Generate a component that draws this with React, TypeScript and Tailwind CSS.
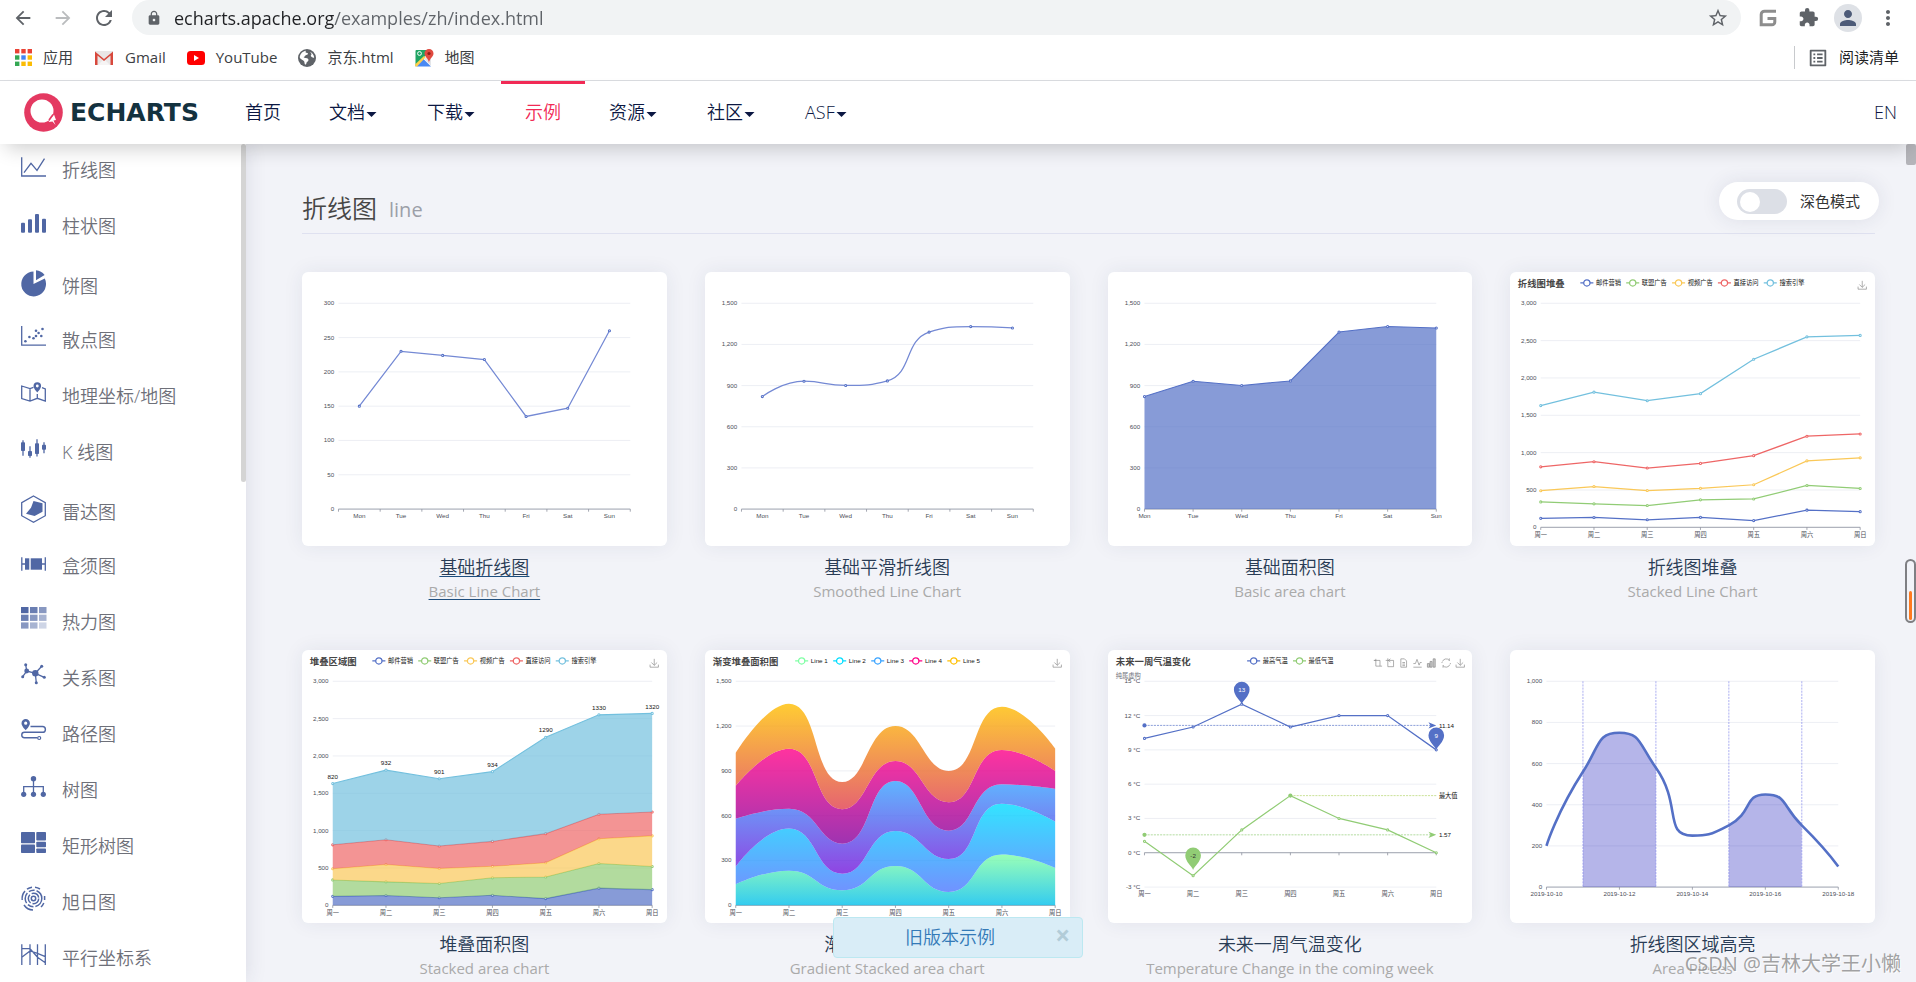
import { Fragment, useState } from "react";
import type { ReactNode } from "react";
import {
  MdArrowBack,
  MdArrowForward,
  MdExtension,
  MdListAlt,
  MdLock,
  MdMoreVert,
  MdPerson,
  MdPublic,
  MdRefresh,
  MdStarBorder,
} from "react-icons/md";

type Point = [number, number];

const WEEK_EN = ["Mon", "Tue", "Wed", "Thu", "Fri", "Sat", "Sun"];
const WEEK_ZH = ["周一", "周二", "周三", "周四", "周五", "周六", "周日"];
const PALETTE = ["#5470c6", "#91cc75", "#fac858", "#ee6666", "#73c0de"];
const CHANNELS = ["邮件营销", "联盟广告", "视频广告", "直接访问", "搜索引擎"];
const VISITS = [820, 932, 901, 934, 1290, 1330, 1320];
const CHANNEL_DATA = [
  [120, 132, 101, 134, 90, 230, 210],
  [220, 182, 191, 234, 290, 330, 310],
  [150, 232, 201, 154, 190, 330, 410],
  [320, 332, 301, 334, 390, 330, 320],
  VISITS,
];
const GRADIENT_DATA = [
  [140, 232, 101, 264, 90, 340, 250],
  [120, 282, 111, 234, 220, 340, 310],
  [320, 132, 201, 334, 190, 130, 220],
  [220, 402, 231, 134, 190, 230, 120],
  [220, 302, 181, 234, 210, 290, 150],
];
const GRADIENT_PALETTE = ["#80ffa5", "#00ddff", "#37a2ff", "#ff0087", "#ffbf00"];
const GRADIENT_STOPS = [
  ["#80ffa5", "#01bfec"],
  ["#00ddff", "#4d77ff"],
  ["#37a2ff", "#7415db"],
  ["#ff0087", "#87009d"],
  ["#ffbf00", "#e03e4c"],
];

/* ---------- chart helpers ---------- */

interface Grid {
  left: number;
  right: number;
  top: number;
  bottom: number;
}

const DEFAULT_GRID: Grid = { left: 70, right: 630, top: 60, bottom: 455 };
const WIDE_GRID: Grid = { left: 59, right: 672, top: 60, bottom: 490 };

const clamp = (v: number, a: number, b: number) =>
  Math.max(Math.min(v, Math.max(a, b)), Math.min(a, b));

const toPoints = (grid: Grid, data: number[], min: number, max: number, boundaryGap = false): Point[] => {
  const width = grid.right - grid.left;
  const step = boundaryGap ? width / data.length : width / (data.length - 1);
  const start = boundaryGap ? grid.left + step / 2 : grid.left;
  return data.map((v, i) => [
    start + i * step,
    grid.bottom - ((v - min) / (max - min)) * (grid.bottom - grid.top),
  ]);
};

const straight = (points: Point[]) => points.map(([x, y]) => `${x} ${y}`).join(" L");

// Cubic segments whose control points never pass the neighbouring values
const smoothPath = (points: Point[], smooth = 0.5) => {
  let path = `${points[0][0]} ${points[0][1]}`;
  let [c0x, c0y] = points[0];
  for (let i = 1; i < points.length; i++) {
    const [px, py] = points[i - 1];
    const [x, y] = points[i];
    let c1x = x;
    let c1y = y;
    let nextX = x;
    let nextY = y;
    if (i < points.length - 1) {
      const [nx, ny] = points[i + 1];
      const lenPrev = Math.hypot(x - px, y - py);
      const lenNext = Math.hypot(nx - x, ny - y);
      const ratio = lenNext / (lenNext + lenPrev);
      nextX = clamp(x + (nx - px) * smooth * ratio, x, nx);
      nextY = clamp(y + (ny - py) * smooth * ratio, y, ny);
      c1x = clamp(x - ((nextX - x) * lenPrev) / lenNext, px, x);
      c1y = clamp(y - ((nextY - y) * lenPrev) / lenNext, py, y);
      nextX = x + ((x - c1x) * lenNext) / lenPrev;
      nextY = y + ((y - c1y) * lenNext) / lenPrev;
    }
    path += ` C${c0x} ${c0y} ${c1x} ${c1y} ${x} ${y}`;
    c0x = nextX;
    c0y = nextY;
  }
  return path;
};

const stack = (series: number[][]) =>
  series.map((_, i) => series[0].map((_, j) => series.slice(0, i + 1).reduce((sum, s) => sum + s[j], 0)));

const Chart = ({ children }: { children: ReactNode }) => (
  <svg
    viewBox="0 0 700 525"
    aria-hidden="true"
    className="block w-full rounded-md bg-white font-['Liberation_Sans','Noto_Sans_CJK_SC',sans-serif] text-[12px] shadow-[0_0_20px_rgba(40,50,90,0.08)]"
  >
    {children}
  </svg>
);

interface AxesProps {
  grid: Grid;
  ticks: string[];
  labels: string[];
  boundaryGap?: boolean;
  axisY?: number;
}

const Axes = ({ grid, ticks, labels, boundaryGap = false, axisY = grid.bottom }: AxesProps) => {
  const width = grid.right - grid.left;
  const gap = (grid.bottom - grid.top) / (ticks.length - 1);
  const step = boundaryGap ? width / labels.length : width / (labels.length - 1);
  const tickCount = boundaryGap ? labels.length + 1 : labels.length;
  return (
    <g>
      {ticks.map((tick, i) => {
        const y = grid.bottom - i * gap;
        return (
          <Fragment key={tick}>
            <path d={`M${grid.left} ${y}H${grid.right}`} stroke="#e8ebf1" strokeWidth="1.5" />
            <text x={grid.left - 8} y={y - 1} textAnchor="end" dominantBaseline="central" fill="#4c4e57">
              {tick}
            </text>
          </Fragment>
        );
      })}
      <path d={`M${grid.left} ${axisY}H${grid.right}`} stroke="#8c909c" strokeWidth="1.5" />
      {Array.from({ length: tickCount }, (_, i) => (
        <path key={i} d={`M${grid.left + i * step} ${axisY}v5`} stroke="#8c909c" strokeWidth="1.5" />
      ))}
      {labels.map((label, i) => (
        <text
          key={label}
          x={grid.left + (boundaryGap ? i + 0.5 : i) * step}
          y={grid.bottom + 13}
          textAnchor="middle"
          dominantBaseline="central"
          fill="#4c4e57"
        >
          {label}
        </text>
      ))}
    </g>
  );
};

const Dots = ({ points, color }: { points: Point[]; color: string }) => (
  <g fill="#fff" stroke={color} strokeWidth="2">
    {points.map(([x, y]) => (
      <circle key={x} cx={x} cy={y} r="2" />
    ))}
  </g>
);

const Title = ({ children }: { children: ReactNode }) => (
  <text x="15" y="23" dominantBaseline="central" fill="#464646" className="text-[18px] font-bold">
    {children}
  </text>
);

const Legend = ({ x, pitch, items, colors }: { x: number; pitch: number; items: string[]; colors: string[] }) => (
  <g>
    {items.map((item, i) => (
      <g key={item} transform={`translate(${x + i * pitch} 21)`}>
        <path d="M0 0H25" stroke={colors[i]} strokeWidth="2.4" />
        <circle cx="12.5" cy="0" r="6" fill="#fff" stroke={colors[i]} strokeWidth="2.4" />
        <text x="30" y="0" dominantBaseline="central" fill="#111">
          {item}
        </text>
      </g>
    ))}
  </g>
);

const DownloadTool = () => (
  <path d="M668 28v5h16v-5M676 17v12M670.500 24l5.500 5.500 5.500-5.500" fill="none" stroke="#888" strokeWidth="1.3" />
);

/* ---------- charts ---------- */

const THOUSANDS = ["0", "300", "600", "900", "1,200", "1,500"];
const STACK_TICKS = ["0", "500", "1,000", "1,500", "2,000", "2,500", "3,000"];

const BasicLine = () => {
  const points = toPoints(DEFAULT_GRID, [150, 230, 224, 218, 135, 147, 260], 0, 300, true);
  return (
    <Chart>
      <Axes grid={DEFAULT_GRID} ticks={["0", "50", "100", "150", "200", "250", "300"]} labels={WEEK_EN} boundaryGap />
      <path d={`M${straight(points)}`} fill="none" stroke="#7489d4" strokeWidth="2.4" />
      <Dots points={points} color="#5470c6" />
    </Chart>
  );
};

const SmoothLine = () => {
  const points = toPoints(DEFAULT_GRID, VISITS, 0, 1500, true);
  return (
    <Chart>
      <Axes grid={DEFAULT_GRID} ticks={THOUSANDS} labels={WEEK_EN} boundaryGap />
      <path d={`M${smoothPath(points)}`} fill="none" stroke="#7489d4" strokeWidth="2.4" />
      <Dots points={points} color="#5470c6" />
    </Chart>
  );
};

const BasicArea = () => {
  const points = toPoints(DEFAULT_GRID, VISITS, 0, 1500);
  return (
    <Chart>
      <Axes grid={DEFAULT_GRID} ticks={THOUSANDS} labels={WEEK_EN} />
      <path d={`M70 455 L${straight(points)} L630 455Z`} fill="#5470c6" fillOpacity="0.7" />
      <path d={`M${straight(points)}`} fill="none" stroke="#5470c6" strokeWidth="2" />
      <Dots points={points} color="#5470c6" />
    </Chart>
  );
};

const StackedLine = () => (
  <Chart>
    <Title>折线图堆叠</Title>
    <Legend x={135} pitch={88} items={CHANNELS} colors={PALETTE} />
    <DownloadTool />
    <Axes grid={WIDE_GRID} ticks={STACK_TICKS} labels={WEEK_ZH} />
    {stack(CHANNEL_DATA).map((data, i) => {
      const points = toPoints(WIDE_GRID, data, 0, 3000);
      return (
        <g key={CHANNELS[i]}>
          <path d={`M${straight(points)}`} fill="none" stroke={PALETTE[i]} strokeWidth="2.4" />
          <Dots points={points} color={PALETTE[i]} />
        </g>
      );
    })}
  </Chart>
);

const StackedArea = () => {
  const rows = stack(CHANNEL_DATA).map((data) => toPoints(WIDE_GRID, data, 0, 3000));
  const base = toPoints(WIDE_GRID, [0, 0, 0, 0, 0, 0, 0], 0, 3000);
  return (
    <Chart>
      <Title>堆叠区域图</Title>
      <Legend x={135} pitch={88} items={CHANNELS} colors={PALETTE} />
      <DownloadTool />
      <Axes grid={WIDE_GRID} ticks={STACK_TICKS} labels={WEEK_ZH} />
      {rows.map((points, i) => {
        const below = [...(rows[i - 1] ?? base)].reverse();
        return (
          <g key={CHANNELS[i]}>
            <path d={`M${straight(points)} L${straight(below)}Z`} fill={PALETTE[i]} fillOpacity="0.7" />
            <path d={`M${straight(points)}`} fill="none" stroke={PALETTE[i]} strokeWidth="2" />
            <Dots points={points} color={PALETTE[i]} />
          </g>
        );
      })}
      {rows[4].map(([x, y], i) => (
        <text key={x} x={x} y={y - 14} textAnchor="middle" dominantBaseline="central" fill="#111">
          {VISITS[i]}
        </text>
      ))}
    </Chart>
  );
};

const GradientArea = () => {
  const rows = stack(GRADIENT_DATA).map((data) => toPoints(WIDE_GRID, data, 0, 1500));
  const base = toPoints(WIDE_GRID, [0, 0, 0, 0, 0, 0, 0], 0, 1500);
  return (
    <Chart>
      <defs>
        {GRADIENT_STOPS.map(([from, to], i) => (
          <linearGradient key={from} id={`band-${i}`} x1="0" y1="0" x2="0" y2="1">
            <stop offset="0" stopColor={from} />
            <stop offset="1" stopColor={to} />
          </linearGradient>
        ))}
      </defs>
      <Title>渐变堆叠面积图</Title>
      <Legend
        x={173}
        pitch={73}
        items={["Line 1", "Line 2", "Line 3", "Line 4", "Line 5"]}
        colors={GRADIENT_PALETTE}
      />
      <DownloadTool />
      <Axes grid={WIDE_GRID} ticks={THOUSANDS} labels={WEEK_ZH} />
      {rows.map((points, i) => {
        const below = [...(rows[i - 1] ?? base)].reverse();
        return (
          <path
            key={i}
            d={`M${smoothPath(points)} L${smoothPath(below)}Z`}
            fill={`url(#band-${i})`}
            fillOpacity="0.8"
          />
        );
      })}
    </Chart>
  );
};

const Pin = ({ x, y, color, text, label }: { x: number; y: number; color: string; text: string; label: string }) => (
  <g transform={`translate(${x} ${y})`}>
    <path d="M0 0C-2-7-15-15-15-28a15 15 0 0 1 30 0C15-15 2-7 0 0Z" fill={color} />
    <text x="0" y="-28" textAnchor="middle" dominantBaseline="central" fill={text}>
      {label}
    </text>
  </g>
);

const Temperature = () => {
  const high = toPoints(DEFAULT_GRID, [10, 11, 13, 11, 12, 12, 9], -3, 15);
  const low = toPoints(DEFAULT_GRID, [1, -2, 2, 5, 3, 2, 0], -3, 15);
  const [highMean, lowMean] = toPoints(DEFAULT_GRID, [11.14, 1.57], -3, 15).map((p) => p[1]);
  return (
    <Chart>
      <Title>未来一周气温变化</Title>
      <text x="15" y="48" dominantBaseline="central" fill="#6e7079">
        纯属虚构
      </text>
      <Legend x={267} pitch={88} items={["最高气温", "最低气温"]} colors={PALETTE} />
      <g fill="none" stroke="#888" strokeWidth="1.3">
        <path d="M511 20h11v11M514 17v14h12M510 20h4" />
        <path d="M537 20h11v12h-11zM537 20v-4M533 20h4M542 17l-4 3 4 3" />
        <path d="M562 17h7l4 4v12h-11zM565 24h5M565 27h5M565 30h5" />
        <path d="M586 33h16M586 26h4l3-8 4 11 2-5h3" />
        <path d="M613 26h4v7h-4zM618 22h4v11h-4zM624 17h4v16h-4z" fill="#ccc" />
        <path d="M642 22a7.500 7.500 0 0 1 13-2M656 28a7.500 7.500 0 0 1-13 2M655 16v5M643 34v-5M641 25v-2M657 25v2" />
      </g>
      <DownloadTool />
      <Axes
        grid={DEFAULT_GRID}
        ticks={["-3 °C", "0 °C", "3 °C", "6 °C", "9 °C", "12 °C", "15 °C"]}
        labels={WEEK_ZH}
        axisY={389}
      />
      <path d={`M${straight(high)}`} fill="none" stroke="#5470c6" strokeWidth="2.4" />
      <path d={`M${straight(low)}`} fill="none" stroke="#91cc75" strokeWidth="2.4" />
      <Dots points={high} color="#5470c6" />
      <Dots points={low} color="#91cc75" />
      <g strokeDasharray="4 2" strokeWidth="1.3">
        <path d={`M70 ${highMean}H622`} stroke="#5470c6" />
        <path d={`M70 ${lowMean}H622`} stroke="#91cc75" />
        <path d={`M350 ${low[3][1]}H630`} stroke="#b4d468" />
      </g>
      <circle cx="70" cy={highMean} r="4" fill="#5470c6" />
      <circle cx="70" cy={lowMean} r="4" fill="#91cc75" />
      <circle cx="350" cy={low[3][1]} r="4" fill="#91cc75" />
      <path d={`M630 ${highMean}l-15-6 4 6-4 6z`} fill="#5470c6" />
      <path d={`M630 ${lowMean}l-15-6 4 6-4 6z`} fill="#91cc75" />
      <g fill="#111" dominantBaseline="central">
        <text x="635" y={highMean}>11.14</text>
        <text x="635" y={lowMean}>1.57</text>
        <text x="635" y={low[3][1]}>最大值</text>
      </g>
      <Pin x={high[2][0]} y={high[2][1]} color="#5470c6" text="#fff" label="13" />
      <Pin x={high[6][0]} y={high[6][1]} color="#5470c6" text="#fff" label="9" />
      <Pin x={low[1][0]} y={low[1][1] - 11} color="#91cc75" text="#333" label="-2" />
    </Chart>
  );
};

const AreaPieces = () => {
  const points = toPoints(DEFAULT_GRID, [200, 560, 750, 580, 250, 300, 450, 300, 100], 0, 1000);
  const curve = smoothPath(points, 0.6);
  return (
    <Chart>
      <defs>
        <clipPath id="pieces">
          <path d="M140 60h140v395h-140zM420 60h140v395h-140z" />
        </clipPath>
      </defs>
      <Axes
        grid={DEFAULT_GRID}
        ticks={["0", "200", "400", "600", "800", "1,000"]}
        labels={["2019-10-10", "2019-10-12", "2019-10-14", "2019-10-16", "2019-10-18"]}
      />
      <path d={`M70 455 L${curve} L630 455Z`} clipPath="url(#pieces)" fill="#0000b4" fillOpacity="0.29" />
      <path d="M140 60V455M280 60V455M420 60V455M560 60V455" stroke="#8488ea" strokeWidth="1.3" strokeDasharray="4 2" />
      <path d={`M${curve}`} fill="none" stroke="#5470c6" strokeWidth="5" />
    </Chart>
  );
};

const EXAMPLES = [
  { title: "基础折线图", subtitle: "Basic Line Chart", chart: <BasicLine />, active: true },
  { title: "基础平滑折线图", subtitle: "Smoothed Line Chart", chart: <SmoothLine /> },
  { title: "基础面积图", subtitle: "Basic area chart", chart: <BasicArea /> },
  { title: "折线图堆叠", subtitle: "Stacked Line Chart", chart: <StackedLine /> },
  { title: "堆叠面积图", subtitle: "Stacked area chart", chart: <StackedArea /> },
  { title: "渐变堆叠面积图", subtitle: "Gradient Stacked area chart", chart: <GradientArea /> },
  { title: "未来一周气温变化", subtitle: "Temperature Change in the coming week", chart: <Temperature /> },
  { title: "折线图区域高亮", subtitle: "Area Pieces", chart: <AreaPieces /> },
];

/* ---------- sidebar ---------- */

interface Category {
  name: string;
  icon: ReactNode;
  tall?: boolean;
}

const CATEGORIES: Category[] = [
  {
    name: "折线图",
    icon: <path d="M.7 3.300V22H25M3 18.700l7-9.400 6 7 7.500-11.600" fill="none" stroke="currentColor" strokeWidth="1.300" />,
  },
  {
    name: "柱状图",
    icon: (
      <>
        <rect x="0" y="12.700" width="4" height="10" rx="1" />
        <rect x="7" y="9.300" width="4" height="13.400" rx="1" />
        <rect x="14" y="4" width="4" height="18.700" rx="1" />
        <rect x="21" y="8.700" width="4" height="14" rx="1" />
      </>
    ),
  },
  {
    name: "饼图",
    tall: true,
    icon: <path d="M12.500 14V1.600A12.400 12.400 0 1 0 23.800 8.600ZM15 10.200V.2A12 12 0 0 1 23.600 5Z" />,
  },
  {
    name: "散点图",
    icon: (
      <>
        <path d="M.7 2v19.200H25" fill="none" stroke="currentColor" strokeWidth="1.300" />
        <circle cx="4.400" cy="17.300" r="1.300" />
        <circle cx="8.400" cy="13" r="1.300" />
        <circle cx="12.500" cy="14.300" r="1.300" />
        <circle cx="15" cy="6.700" r="1.300" />
        <circle cx="15" cy="12" r="1.300" />
        <circle cx="17.600" cy="9" r="1.300" />
        <circle cx="20.300" cy="12" r="1.300" />
        <circle cx="21.500" cy="5" r="1.300" />
      </>
    ),
  },
  {
    name: "地理坐标/地图",
    icon: (
      <>
        <path
          d="M12.500 7.300 9 8.500.7 6v12.500L9 21l7.300-2.700 8 2.700V9L21 7.700M9 8.500V21M16.300 14v4"
          fill="none"
          stroke="currentColor"
          strokeWidth="1.300"
        />
        <path
          fillRule="evenodd"
          d="M16.300 2.200a3.800 3.800 0 0 1 3.800 3.800c0 2.500-3.800 6.500-3.800 6.500S12.500 8.500 12.500 6a3.800 3.800 0 0 1 3.800-3.800Zm0 2.400a1.400 1.400 0 1 0 0 2.800 1.400 1.400 0 0 0 0-2.800Z"
        />
      </>
    ),
  },
  {
    name: "K 线图",
    icon: (
      <>
        <path d="M2 4.300v15.400M9 10.300v11.400M16 3.300V20.500M23 6.300v11" stroke="currentColor" strokeWidth="1.300" />
        <rect x="0" y="6.300" width="4" height="8.700" rx=".8" />
        <rect x="7" y="15" width="4" height="5" rx=".8" />
        <rect x="14" y="7.300" width="4" height="10.700" rx=".8" />
        <rect x="21" y="8.700" width="4" height="5" rx=".8" />
      </>
    ),
  },
  {
    name: "雷达图",
    tall: true,
    icon: (
      <>
        <path d="M12.500 0 24.300 6.700v13L12.500 26.300.7 19.700v-13Z" fill="none" stroke="currentColor" strokeWidth="1.300" />
        <path d="M12.500 5l9 2.300v8.400L13.600 20l-8.600-2.300 5-6Z" />
      </>
    ),
  },
  {
    name: "盒须图",
    icon: (
      <>
        <path d="M.8 7.300v13.400M.8 14H4M24.300 7.300v13.400M21 14h3.300" stroke="currentColor" strokeWidth="1.300" />
        <rect x="4" y="8.300" width="4.300" height="11.400" />
        <rect x="9.700" y="8.300" width="11.300" height="11.400" />
      </>
    ),
  },
  {
    name: "热力图",
    icon: (
      <>
        {[0, 1, 2].map((row) =>
          [0, 1, 2].map((col) => (
            <rect
              key={`${row}${col}`}
              x={col * 9}
              y={1 + row * 7.7}
              width="7.500"
              height="6.200"
              opacity={[1, 0.85, 0.68, 0.5, 0.28][row + col]}
            />
          )),
        )}
      </>
    ),
  },
  {
    name: "关系图",
    icon: (
      <>
        <path
          d="M4.700 2.700l1 6.300-4 5.700M5.700 9l8.600 2.300 6.400-7M14.300 11.300l9 4M14.300 11.300l1 9.400"
          fill="none"
          stroke="currentColor"
          strokeWidth="1.300"
        />
        <circle cx="4.700" cy="2.700" r="1.500" />
        <circle cx="5.700" cy="9" r="2.400" />
        <circle cx="1.700" cy="14.700" r="1.500" />
        <circle cx="14.300" cy="11.300" r="3.200" />
        <circle cx="20.700" cy="4.300" r="1.500" />
        <circle cx="23.300" cy="15.300" r="1.500" />
        <circle cx="15.300" cy="20.700" r="1.500" />
      </>
    ),
  },
  {
    name: "路径图",
    icon: (
      <>
        <path
          d="M9.500 8.500H21.500a2.900 2.900 0 0 1 0 5.800H3.500a2.700 2.700 0 0 0 0 5.500h13"
          fill="none"
          stroke="currentColor"
          strokeWidth="1.400"
        />
        <circle cx="18.200" cy="20" r="1.500" fill="none" stroke="currentColor" strokeWidth="1.200" />
        <path
          fillRule="evenodd"
          d="M4.700 1a4.200 4.200 0 0 1 4.200 4.200c0 3-4.200 7-4.200 7S.5 8.200.5 5.200A4.200 4.200 0 0 1 4.700 1Zm0 2.600a1.600 1.600 0 1 0 0 3.200 1.600 1.600 0 0 0 0-3.200Z"
        />
      </>
    ),
  },
  {
    name: "树图",
    icon: (
      <>
        <path d="M12.500 4.700v15M2.700 20v-7.300h19.600V20" fill="none" stroke="currentColor" strokeWidth="1.300" />
        <circle cx="12.500" cy="4.700" r="2.700" />
        <circle cx="2.700" cy="20.300" r="2.600" />
        <circle cx="12.500" cy="20.300" r="2.600" />
        <circle cx="22.300" cy="20.300" r="2.600" />
      </>
    ),
  },
  {
    name: "矩形树图",
    icon: (
      <>
        <rect x="0" y="2" width="14" height="11.300" rx=".8" />
        <rect x="0" y="14.500" width="14" height="8.500" rx=".8" />
        <rect x="15.300" y="2" width="9.700" height="8.500" rx=".8" />
        <rect x="15.300" y="11.700" width="9.700" height="5.600" rx=".8" />
        <rect x="15.300" y="18.500" width="9.700" height="4.500" rx=".8" />
      </>
    ),
  },
  {
    name: "旭日图",
    icon: (
      <g fill="none" stroke="currentColor" strokeWidth="1.500">
        <circle cx="12.500" cy="12.500" r="2.200" />
        <circle cx="12.500" cy="12.500" r="5.200" strokeDasharray="9 2" />
        <circle cx="12.500" cy="12.500" r="8.300" strokeDasharray="11 2 6 2" />
        <path d="M1.200 14A11.400 11.400 0 0 1 4 5M6 3.200A11.400 11.400 0 0 1 11 1.200M14 1.200A11.400 11.400 0 0 1 19 3M23.600 10v4M22.800 17A11.400 11.400 0 0 1 20 21M3 19A11.400 11.400 0 0 0 12 24" />
      </g>
    ),
  },
  {
    name: "平行坐标系",
    icon: (
      <path
        d="M.8 2.300V23M9 2.300V23M16.500 2.300V23M24.300 2.300V23M.8 6.700H9l7.500 8.600 7.800 5.400M.8 15.300 9 9l7.500 2.300 7.800 3.400"
        fill="none"
        stroke="currentColor"
        strokeWidth="1.300"
      />
    ),
  },
];

const Sidebar = () => (
  <nav
    aria-label="图表类型"
    className="relative w-[246px] shrink-0 bg-white shadow-[0_0_20px_rgba(40,50,90,0.12)]"
  >
    <ul className="flex flex-col gap-5 pt-2 pl-[21px]">
      {CATEGORIES.map(({ name, icon, tall }) => (
        <li key={name} className={tall ? "h-[38px] pt-1" : "h-9"}>
          <a href="#" className="flex items-center gap-4 text-[18px] leading-9 font-[350] text-[#6e7079]">
            <svg
              viewBox="0 0 25 32"
              aria-hidden="true"
              className="h-8 w-[25px] shrink-0 overflow-visible text-[#5067a4]"
              fill="currentColor"
            >
              {icon}
            </svg>
            {name}
          </a>
        </li>
      ))}
    </ul>
    <div className="absolute top-0 right-0 h-[338px] w-[5px] rounded-full bg-[#d4d4d4]" />
  </nav>
);

/* ---------- browser chrome ---------- */

const GmailIcon = () => (
  <svg viewBox="0 0 20 16" aria-hidden="true" className="h-4 w-5">
    <path d="M1 1h18v14H1z" fill="#e9e6e6" />
    <path d="M4 15 10 9l6 6z" fill="#f6f4f4" />
    <path d="M1 15V1.500L10 9l9-7.500V15h-2.500V5.500L10 11 3.500 5.500V15Z" fill="#d8483c" />
  </svg>
);

const YouTubeIcon = () => (
  <svg viewBox="0 0 18 14" aria-hidden="true" className="h-[14px] w-[18px]">
    <rect width="18" height="14" rx="3.500" fill="#f00" />
    <path d="M7 4v6l5-3z" fill="#fff" />
  </svg>
);

const MapsIcon = () => (
  <svg viewBox="0 0 19 18" aria-hidden="true" className="h-[18px] w-[19px]">
    <path d="M1.500 1H14l-6 9-7.500 7.500V2a1 1 0 0 1 1-1Z" fill="#1fa463" />
    <path d="M1 17 8 9.500 16 17.500H2Z" fill="#4a89f3" />
    <path d="M12 7l4 3v7L9.500 10Z" fill="#e3e5e8" />
    <path d="M0 15.500 9 7l1.500 1.500L2 17.500H.5z" fill="#ffd04b" />
    <circle cx="4.500" cy="4.500" r="1.900" fill="none" stroke="#fff" strokeWidth="1" />
    <path d="M14 0a4.500 4.500 0 0 1 4.500 4.500C18.500 8 14.500 9 14 14c-.5-5-4.500-6-4.500-9.500A4.500 4.500 0 0 1 14 0Z" fill="#e04a3f" />
    <circle cx="14" cy="4.500" r="1.600" fill="#8c1f17" />
  </svg>
);

const AppsIcon = () => (
  <svg viewBox="0 0 17 17" aria-hidden="true" className="size-[17px]">
    {["#ea4335", "#ea4335", "#ea4335", "#34a853", "#4285f4", "#fbbc04", "#34a853", "#fbbc04", "#fbbc04"].map(
      (color, i) => (
        <rect key={i} x={(i % 3) * 6.3} y={Math.floor(i / 3) * 6.3} width="4.400" height="4.400" fill={color} />
      ),
    )}
  </svg>
);

const BOOKMARKS = [
  { label: "应用", icon: <AppsIcon /> },
  { label: "Gmail", icon: <GmailIcon /> },
  { label: "YouTube", icon: <YouTubeIcon /> },
  {
    label: "京东.html",
    icon: (
      <svg viewBox="0 0 18 18" aria-hidden="true" className="size-[18px]">
        <circle cx="9" cy="9" r="9" fill="#5f6368" />
        <path
          d="M8 1.800c-1 1.400-.2 2.200 1.200 2.200 1.600.2.600 1.800-.8 2-1.600.2-1 1.600-2.400 1.800-.8.600.4 1.400 1.800 1.200 2 0 3 1.200 2.600 2.600-.4 1-1.800 1.400-2 2.600-.2 1-.6 1.600-1.400 1.200-.8-1-.2-2.600-1.400-3.600C4.200 10.600 2.200 10 1.700 8.200 2.200 4.800 4.800 2.200 8 1.800ZM12.500 3c2 1.200 3.400 3.200 3.700 5.400-.9.800-2.200.2-3-.8-.8-1-.2-1.800.4-2.400.2-.8-1.300-1.200-1.100-2.200Z"
          fill="#fff"
        />
      </svg>
    ),
  },
  { label: "地图", icon: <MapsIcon /> },
];

const BrowserBar = () => (
  <div className="border-b border-[#dadce0] bg-white">
    <div className="flex h-[35px] items-center pr-4 pl-3">
      <button type="button" aria-label="后退" className="mr-[18px] text-[#5f6368]">
        <MdArrowBack className="size-[22px]" />
      </button>
      <button type="button" aria-label="前进" className="mr-[18px] text-[#babcbe]">
        <MdArrowForward className="size-[22px]" />
      </button>
      <button type="button" aria-label="重新加载" className="mr-4 text-[#5f6368]">
        <MdRefresh className="size-6" />
      </button>
      <div className="flex h-full flex-1 items-center rounded-full bg-[#f1f3f4] pr-3 pl-3.5">
        <MdLock className="size-4 text-[#5f6368]" />
        <input
          type="text"
          aria-label="地址"
          defaultValue="echarts.apache.org/examples/zh/index.html"
          className="ml-3 flex-1 bg-[linear-gradient(90deg,#202124_160px,#5f6368_160px)] bg-clip-text text-[18px] leading-6 text-transparent outline-none"
        />
        <button type="button" aria-label="收藏" className="text-[#5f6368]">
          <MdStarBorder className="size-[22px]" />
        </button>
      </div>
      <div className="ml-[18px] flex items-center text-[#5f6368]">
        <svg viewBox="0 0 18 18" aria-hidden="true" className="size-[18px]">
          <path d="M17 2.200H5.500a3.300 3.300 0 0 0-3.300 3.300v10.300H13a2.800 2.800 0 0 0 2.800-2.800V9.500H8.500" fill="none" stroke="#8d8d8d" strokeWidth="3" />
        </svg>
        <button type="button" aria-label="扩展程序" className="ml-[21px]">
          <MdExtension className="size-[21px]" />
        </button>
        <button
          type="button"
          aria-label="个人资料"
          className="ml-[15px] flex size-7 items-center justify-center rounded-full bg-[#dee1e6] text-[#4d5b78]"
        >
          <MdPerson className="size-6" />
        </button>
        <button type="button" aria-label="更多" className="ml-3.5">
          <MdMoreVert className="size-6" />
        </button>
      </div>
    </div>
    <div className="flex h-[45px] items-center gap-[21px] pr-[17px] pl-[15px] text-[15px] text-[#3c4043]">
      {BOOKMARKS.map(({ label, icon }) => (
        <a key={label} href="#" className="flex items-center gap-[11px]">
          {icon}
          {label}
        </a>
      ))}
      <button type="button" className="ml-auto flex items-center gap-2.5 border-l border-[#c8cacd] pl-3 text-[#202124]">
        <MdListAlt className="size-[22px] text-[#5f6368]" />
        阅读清单
      </button>
    </div>
  </div>
);

/* ---------- site header ---------- */

const NAV = [
  { label: "首页" },
  { label: "文档", menu: true },
  { label: "下载", menu: true },
  { label: "示例", active: true },
  { label: "资源", menu: true },
  { label: "社区", menu: true },
  { label: "ASF", menu: true },
];

const Header = () => (
  <header className="relative z-10 flex h-[63px] items-stretch bg-white pr-[19px] pl-6 text-[18px] font-[350] text-[#0b1742] shadow-[0_10px_20px_-6px_rgba(0,0,0,0.2)]">
    <a href="#" className="flex w-[197px] items-center gap-[7px]">
      <svg viewBox="0 0 39 41" aria-hidden="true" className="h-[41px] w-[39px]">
        <circle cx="19.500" cy="20.500" r="19.300" fill="#e43961" />
        <circle cx="18" cy="19" r="11.500" fill="#fff" />
        <path d="M24.500 30 30 22.500l2 5.500-2.500.5 2 4.500-3-3.500z" fill="#fff" />
        <path d="m25 28 4-5.500" stroke="#e43961" strokeWidth="1.500" />
      </svg>
      <span className="font-['DejaVu_Sans',sans-serif] text-[25px] font-bold text-[#14323f]">ECHARTS</span>
    </a>
    <nav aria-label="主导航" className="flex">
      {NAV.map(({ label, menu, active }) => (
        <a
          key={label}
          href="#"
          className={
            active
              ? "flex items-center border-t-3 border-[#f12a55] px-6 pb-1 text-[#f12a55]"
              : "flex items-center px-6"
          }
        >
          {label}
          {menu && (
            <svg viewBox="0 0 14 8" aria-hidden="true" className="mt-1 h-2 w-[14px]" fill="currentColor">
              <path d="M1.500 1h10L6.500 6Z" />
            </svg>
          )}
        </a>
      ))}
    </nav>
    <a href="#" className="ml-auto flex items-center">
      EN
    </a>
  </header>
);

/* ---------- page ---------- */

export default function App() {
  const [dark, setDark] = useState(false);
  const [notice, setNotice] = useState(true);

  return (
    <div className="relative flex h-screen flex-col overflow-hidden bg-[#f2f3f8] font-['Open_Sans','Noto_Sans_CJK_SC',sans-serif]">
      <BrowserBar />
      <Header />
      <div className="relative flex min-h-0 flex-1">
        <Sidebar />
        <main className="min-w-0 flex-1 overflow-hidden pr-[41px] pl-14">
          <h1 className="flex h-[90px] items-end gap-3 border-b border-[#dfe1f0] pb-1.5 text-[25px] font-[350] text-[#464646]">
            折线图
            <span className="text-[20px] leading-[34px] font-normal text-[#9c9fa8]">line</span>
          </h1>
          <div className="mt-[38px] grid grid-cols-4 gap-x-[38px] gap-y-12">
            {EXAMPLES.map(({ title, subtitle, chart, active }) => (
              <a
                key={title}
                href="#"
                className={active ? "block text-center text-[#1d4e7e] underline underline-offset-2" : "block text-center"}
              >
                {chart}
                <h2 className="mt-2 text-[18px] leading-[26px] font-[350] text-[#293c55]">{title}</h2>
                <p className="text-[15px] leading-[22px] text-[#aaa]">{subtitle}</p>
              </a>
            ))}
          </div>
        </main>

        <label className="absolute top-[38px] right-[37px] flex h-[38px] items-center gap-[13px] rounded-full bg-white pr-[19px] pl-[18px] text-[15px] text-[#333] shadow-[0_0_20px_rgba(40,50,90,0.1)]">
          <input
            type="checkbox"
            role="switch"
            checked={dark}
            onChange={(e) => setDark(e.target.checked)}
            className="h-[25px] w-[50px] appearance-none rounded-full bg-[#dcdfe6] p-[3px] before:block before:size-[20px] before:rounded-full before:bg-white checked:bg-[#5067a4] checked:before:ml-6"
          />
          深色模式
        </label>

        <div className="absolute top-0 right-0 h-[21px] w-2.5 rounded-xs bg-[#b5b5ba]" />
        <div className="absolute top-[415px] right-0 flex h-16 w-[11px] items-end justify-center rounded-full border-2 border-[#7f7f83] bg-[#f2f3f8] pb-px">
          <div className="h-[29px] w-[3px] rounded-full bg-[#ff7a1f]" />
        </div>
      </div>

      {notice && (
        <div className="absolute bottom-6 left-1/2 flex h-[41px] w-[250px] -translate-x-1/2 items-center justify-center rounded-sm border border-[#bce8f1] bg-[#d9edf7] text-[18px] font-[350]">
          <a href="#" className="-ml-4 text-[#337ab7]">
            旧版本示例
          </a>
          <button
            type="button"
            aria-label="关闭"
            onClick={() => setNotice(false)}
            className="absolute right-3 bottom-2.5 text-[26px] leading-6 font-bold text-[#b2ccd8]"
          >
            ×
          </button>
        </div>
      )}

      <div className="absolute right-[15px] bottom-0 text-[20px] leading-9 text-[#8a8a8a]/80 [text-shadow:1px_1px_0_rgba(255,255,255,0.8)]">
        CSDN @吉林大学王小懒
      </div>
    </div>
  );
}
